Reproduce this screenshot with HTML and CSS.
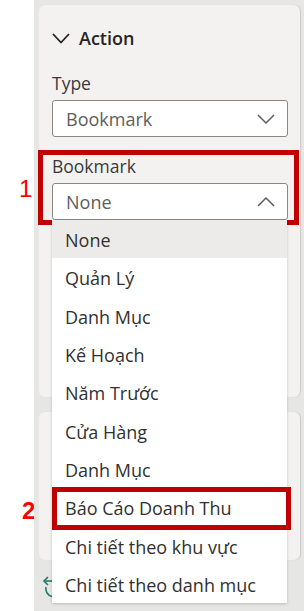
FILE: index.html
```html
<!DOCTYPE html>
<html lang="vi">
<head>
  <meta charset="UTF-8" />
  <meta name="viewport" content="width=device-width, initial-scale=1.0"/>
  <title>Action - Bookmark</title>
  <link rel="stylesheet" href="styles.css">
</head>
<body>
  <div class="page">
    <div class="gutter">
      <span class="mark mark_one">1</span>
      <span class="mark mark_two">2</span>
    </div>
    <div class="pane">
      <div class="card action_card">
        <div class="card_header">
          <svg class="header_chevron" width="18" height="11" viewBox="0 0 18 11">
            <polyline points="1,1 9,9.5 17,1" fill="none" stroke="#252423" stroke-width="1.8"/>
          </svg>
          <span>Action</span>
        </div>

        <div class="field">
          <div class="field_label">Type</div>
          <div class="select">
            <span>Bookmark</span>
            <svg width="18" height="10" viewBox="0 0 18 10">
              <polyline points="1,1 9,9 17,1" fill="none" stroke="#605e5c" stroke-width="1.5"/>
            </svg>
          </div>
        </div>

        <div class="field highlight">
          <div class="field_label">Bookmark</div>
          <div class="select">
            <span>None</span>
            <svg width="18" height="10" viewBox="0 0 18 10">
              <polyline points="1,9 9,1 17,9" fill="none" stroke="#605e5c" stroke-width="1.5"/>
            </svg>
          </div>
        </div>
      </div>

      <div class="card second_card"></div>

      <div class="footer">
        <svg class="reset_icon" width="26" height="28" viewBox="0 0 26 28">
          <path d="M4 8 H14" fill="none" stroke="#1f7a6d" stroke-width="1.6"/>
          <polyline points="8,4 4,8 8,12" fill="none" stroke="#1f7a6d" stroke-width="1.6"/>
          <path d="M6 14 A8 8 0 1 0 16 8" fill="none" stroke="#1f7a6d" stroke-width="1.6"/>
        </svg>
      </div>

      <ul class="dropdown">
        <li class="selected">None</li>
        <li>Quản Lý</li>
        <li>Danh Mục</li>
        <li>Kế Hoạch</li>
        <li>Năm Trước</li>
        <li>Cửa Hàng</li>
        <li>Danh Mục</li>
        <li class="boxed">Báo Cáo Doanh Thu<span class="box_outline"></span></li>
        <li>Chi tiết theo khu vực</li>
        <li>Chi tiết theo danh mục</li>
      </ul>
    </div>
  </div>
</body>
</html>
```

FILE: styles.css
```css
body {
  margin: 0;
  background-color: #ffffff;
  font-family: "Open Sans", "Noto Sans", sans-serif;
  color: #252423;
}

.page {
  display: flex;
  flex-direction: row;
  height: 611px;
  position: relative;
  overflow: hidden;
}

.gutter {
  width: 34px;
  flex-shrink: 0;
}

.mark {
  position: absolute;
  color: #ff0000;
  font-family: "Liberation Sans", Arial, sans-serif;
  font-size: 24px;
  line-height: 1;
}

.mark_one {
  left: 19px;
  top: 177px;
}

.mark_two {
  left: 22px;
  top: 499px;
  font-weight: bold;
}

.pane {
  flex: 1;
  background-color: #e6e6e5;
  padding: 5px 4px 0 5px;
  position: relative;
  display: flex;
  flex-direction: column;
}

.card {
  background-color: #f3f2f1;
  border-radius: 6px;
  box-shadow: 1px 0 1px rgba(0, 0, 0, 0.12);
}

.action_card {
  height: 392px;
  box-sizing: border-box;
  padding: 20px 12px 0 13px;
}

.card_header {
  display: flex;
  align-items: center;
  gap: 9px;
  height: 26px;
  font-size: 18px;
  font-weight: 600;
}

.field {
  margin-top: 21px;
}

.field_label {
  font-size: 17.5px;
  line-height: 22px;
  color: #3b3a39;
  margin-bottom: 6px;
}

.select {
  height: 37px;
  box-sizing: border-box;
  border: 1px solid #8a8886;
  border-radius: 3px;
  background-color: #ffffff;
  display: flex;
  align-items: center;
  justify-content: space-between;
  padding: 0 12px 0 13px;
  font-size: 18px;
  color: #605e5c;
}

.highlight {
  margin: 13px -11px 0 -14px;
  border: 5px solid #c00000;
  padding: 0 6px 0 9px;
}

.second_card {
  height: 148px;
  margin-top: 15px;
}

.footer {
  padding: 13px 0 0 1px;
}

.reset_icon {
  display: block;
}

.dropdown {
  position: absolute;
  left: 18px;
  top: 220px;
  width: 235px;
  margin: 0;
  padding: 0;
  list-style: none;
  background-color: #ffffff;
  box-shadow: 0 1px 3px rgba(0, 0, 0, 0.18);
}

.dropdown li {
  height: 38.3px;
  display: flex;
  align-items: center;
  padding: 2px 0 0 13px;
  box-sizing: border-box;
  font-size: 18px;
  color: #323130;
  position: relative;
}

.dropdown li.selected {
  background-color: #edebe9;
}

.box_outline {
  position: absolute;
  left: 0;
  right: -4px;
  top: -1px;
  bottom: -4px;
  border: 5px solid #c00000;
}
```
